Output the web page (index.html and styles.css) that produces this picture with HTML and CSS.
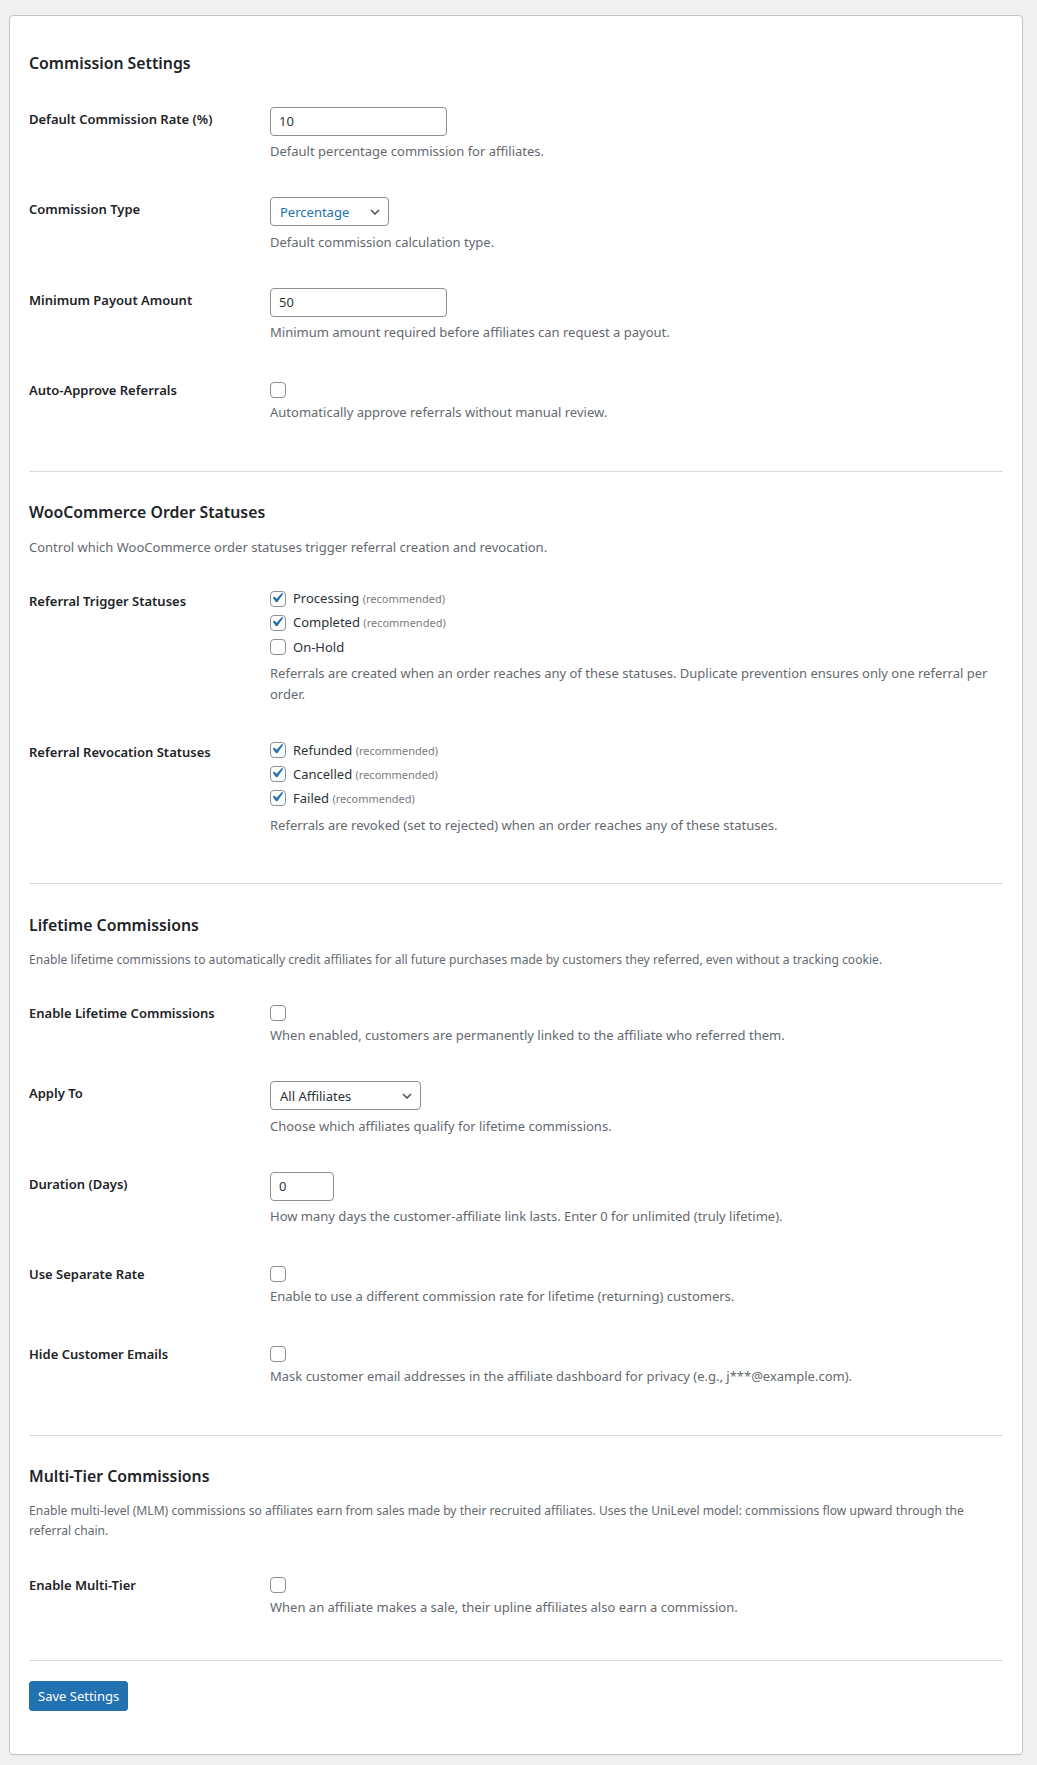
FILE: index.html
```html
<!DOCTYPE html>
<html lang="en">
<head>
<meta charset="utf-8">
<title>Commission Settings</title>
<link rel="stylesheet" href="styles.css">
</head>
<body>
<div class="wrap">
  <form class="card">
    <section class="sec">
      <h2 class="sec-title">Commission Settings</h2>
      <div class="rows">
        <div class="row">
          <div class="label">Default Commission Rate (%)</div>
          <div class="field">
            <input class="input" type="text" value="10">
            <p class="desc after-ctl">Default percentage commission for affiliates.</p>
          </div>
        </div>
        <div class="row">
          <div class="label">Commission Type</div>
          <div class="field">
            <div class="select sel-type"><span class="sel-val blue">Percentage</span><svg class="chev" viewBox="0 0 10 6" width="10" height="6"><polyline points="1,1 5,5 9,1" fill="none" stroke="#50575e" stroke-width="1.6"/></svg></div>
            <p class="desc after-ctl">Default commission calculation type.</p>
          </div>
        </div>
        <div class="row">
          <div class="label">Minimum Payout Amount</div>
          <div class="field">
            <input class="input" type="text" value="50">
            <p class="desc after-ctl">Minimum amount required before affiliates can request a payout.</p>
          </div>
        </div>
        <div class="row">
          <div class="label">Auto-Approve Referrals</div>
          <div class="field">
            <div class="checkline"><span class="cb"></span></div>
            <p class="desc">Automatically approve referrals without manual review.</p>
          </div>
        </div>
      </div>
    </section>

    <hr class="sep">

    <section class="sec">
      <h2 class="sec-title">WooCommerce Order Statuses</h2>
      <p class="sec-desc">Control which WooCommerce order statuses trigger referral creation and revocation.</p>
      <div class="rows">
        <div class="row">
          <div class="label">Referral Trigger Statuses</div>
          <div class="field">
            <div class="opts">
              <div class="opt"><span class="cb"><svg viewBox="3 3 16 16" width="16" height="16"><path d="M14.83 4.89l1.34.94-5.81 8.38H9.02L5.78 9.670l1.34-1.25 2.57 2.4z" fill="#2271b1"/></svg></span><span class="opt-text">Processing <span class="rec">(recommended)</span></span></div>
              <div class="opt"><span class="cb"><svg viewBox="3 3 16 16" width="16" height="16"><path d="M14.83 4.89l1.34.94-5.81 8.38H9.02L5.78 9.670l1.34-1.25 2.57 2.4z" fill="#2271b1"/></svg></span><span class="opt-text">Completed <span class="rec">(recommended)</span></span></div>
              <div class="opt"><span class="cb"></span><span class="opt-text">On-Hold</span></div>
            </div>
            <p class="desc after-opts">Referrals are created when an order reaches any of these statuses. Duplicate prevention ensures only one referral per order.</p>
          </div>
        </div>
        <div class="row">
          <div class="label">Referral Revocation Statuses</div>
          <div class="field">
            <div class="opts">
              <div class="opt"><span class="cb"><svg viewBox="3 3 16 16" width="16" height="16"><path d="M14.83 4.89l1.34.94-5.81 8.38H9.02L5.78 9.670l1.34-1.25 2.57 2.4z" fill="#2271b1"/></svg></span><span class="opt-text">Refunded <span class="rec">(recommended)</span></span></div>
              <div class="opt"><span class="cb"><svg viewBox="3 3 16 16" width="16" height="16"><path d="M14.83 4.89l1.34.94-5.81 8.38H9.02L5.78 9.670l1.34-1.25 2.57 2.4z" fill="#2271b1"/></svg></span><span class="opt-text">Cancelled <span class="rec">(recommended)</span></span></div>
              <div class="opt"><span class="cb"><svg viewBox="3 3 16 16" width="16" height="16"><path d="M14.83 4.89l1.34.94-5.81 8.38H9.02L5.78 9.670l1.34-1.25 2.57 2.4z" fill="#2271b1"/></svg></span><span class="opt-text">Failed <span class="rec">(recommended)</span></span></div>
            </div>
            <p class="desc after-opts">Referrals are revoked (set to rejected) when an order reaches any of these statuses.</p>
          </div>
        </div>
      </div>
    </section>

    <hr class="sep">

    <section class="sec">
      <h2 class="sec-title">Lifetime Commissions</h2>
      <p class="sec-desc small">Enable lifetime commissions to automatically credit affiliates for all future purchases made by customers they referred, even without a tracking cookie.</p>
      <div class="rows">
        <div class="row">
          <div class="label">Enable Lifetime Commissions</div>
          <div class="field">
            <div class="checkline"><span class="cb"></span></div>
            <p class="desc">When enabled, customers are permanently linked to the affiliate who referred them.</p>
          </div>
        </div>
        <div class="row">
          <div class="label">Apply To</div>
          <div class="field">
            <div class="select sel-apply"><span class="sel-val">All Affiliates</span><svg class="chev" viewBox="0 0 10 6" width="10" height="6"><polyline points="1,1 5,5 9,1" fill="none" stroke="#50575e" stroke-width="1.6"/></svg></div>
            <p class="desc after-ctl">Choose which affiliates qualify for lifetime commissions.</p>
          </div>
        </div>
        <div class="row">
          <div class="label">Duration (Days)</div>
          <div class="field">
            <input class="input input-small" type="text" value="0">
            <p class="desc after-ctl">How many days the customer-affiliate link lasts. Enter 0 for unlimited (truly lifetime).</p>
          </div>
        </div>
        <div class="row">
          <div class="label">Use Separate Rate</div>
          <div class="field">
            <div class="checkline"><span class="cb"></span></div>
            <p class="desc">Enable to use a different commission rate for lifetime (returning) customers.</p>
          </div>
        </div>
        <div class="row">
          <div class="label">Hide Customer Emails</div>
          <div class="field">
            <div class="checkline"><span class="cb"></span></div>
            <p class="desc">Mask customer email addresses in the affiliate dashboard for privacy (e.g., j***@example.com).</p>
          </div>
        </div>
      </div>
    </section>

    <hr class="sep">

    <section class="sec">
      <h2 class="sec-title">Multi-Tier Commissions</h2>
      <p class="sec-desc small">Enable multi-level (MLM) commissions so affiliates earn from sales made by their recruited affiliates. Uses the UniLevel model: commissions flow upward through the referral chain.</p>
      <div class="rows">
        <div class="row">
          <div class="label">Enable Multi-Tier</div>
          <div class="field">
            <div class="checkline"><span class="cb"></span></div>
            <p class="desc">When an affiliate makes a sale, their upline affiliates also earn a commission.</p>
          </div>
        </div>
      </div>
    </section>

    <hr class="sep sep-last">

    <button class="btn" type="button">Save Settings</button>
  </form>
</div>
</body>
</html>
```

FILE: styles.css
```css
html, body {
  margin: 0;
  padding: 0;
  background: #f0f0f1;
}

body {
  font-family: "Noto Sans", "Open Sans", sans-serif;
  font-size: 13px;
  color: #3c434a;
}

.wrap {
  padding: 15px 14px 10px 9px;
}

.card {
  display: block;
  margin: 0;
  background: #fff;
  border: 1px solid #c3c4c7;
  border-radius: 4px;
  box-shadow: 0 1px 1px rgba(0, 0, 0, 0.04);
  padding: 35px 19px 43px;
}

.sec-title {
  margin: 0;
  font-size: 15.8px;
  font-weight: 600;
  line-height: 24px;
  color: #1d2327;
}

.sec-desc {
  margin: 13px 0 0;
  font-size: 13px;
  line-height: 20px;
  color: #646970;
}

.sec-desc.small {
  font-size: 12.1px;
}

.rows {
  margin-top: 31.5px;
  display: flex;
  flex-direction: column;
  gap: 35px;
}

.row {
  display: grid;
  grid-template-columns: 241px 1fr;
}

.label {
  font-size: 13px;
  font-weight: 600;
  line-height: 24px;
  color: #1d2327;
}

.field {
  min-width: 0;
}

.desc {
  margin: 0;
  font-size: 13px;
  line-height: 21px;
  color: #646970;
}

.desc.after-ctl {
  margin-top: 5.5px;
}

.desc.after-opts {
  margin-top: 4.5px;
}

.input {
  display: block;
  box-sizing: border-box;
  width: 177px;
  height: 29px;
  margin: 0;
  padding: 0 8px;
  border: 1px solid #8c8f94;
  border-radius: 4px;
  background: #fff;
  font-family: "Noto Sans", "Open Sans", sans-serif;
  font-size: 13px;
  color: #2c3338;
  outline: none;
}

.input-small {
  width: 64px;
}

.select {
  box-sizing: border-box;
  height: 29px;
  display: flex;
  align-items: center;
  justify-content: space-between;
  padding: 0 8px 0 9px;
  border: 1px solid #8c8f94;
  border-radius: 4px;
  background: #fff;
  font-size: 13px;
  color: #2c3338;
}

.sel-type {
  width: 119px;
}

.sel-apply {
  width: 151px;
}

.sel-val.blue {
  color: #2271b1;
}

.chev {
  display: block;
  flex: none;
}

.checkline {
  height: 24px;
  display: flex;
  align-items: center;
}

.cb {
  box-sizing: border-box;
  flex: none;
  width: 16px;
  height: 16px;
  border: 1px solid #8c8f94;
  border-radius: 4px;
  background: #fff;
  display: block;
}

.cb svg {
  display: block;
  margin: -1px;
}

.opts {
  margin-top: -2px;
}

.opt {
  height: 24px;
  display: flex;
  align-items: center;
  gap: 7px;
}

.opt-text {
  font-size: 13px;
  color: #2c3338;
  line-height: 24px;
}

.rec {
  font-size: 11px;
  color: #787c82;
}

.sep {
  border: 0;
  border-top: 1px solid #dcdcde;
  margin: 47.5px 0 28.5px;
  height: 0;
}

.sep-last {
  margin: 42.5px 0 20px;
}

.btn {
  display: block;
  box-sizing: border-box;
  height: 30px;
  padding: 0 8px;
  margin: 0;
  border: 1px solid #2271b1;
  border-radius: 3px;
  background: #2271b1;
  color: #fff;
  font-family: "Noto Sans", "Open Sans", sans-serif;
  font-size: 13px;
  line-height: 28px;
  cursor: pointer;
}
```
